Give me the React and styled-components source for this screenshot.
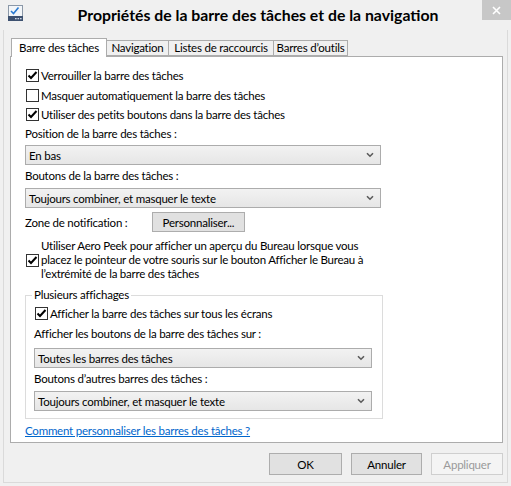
import React from 'react';
import styled, { createGlobalStyle } from 'styled-components';

const GlobalStyle = createGlobalStyle`
    body {
        margin: 0;
        background: #f0f0f0;
        font-family: Lato, "Noto Sans", sans-serif;
        font-size: 11.5px;
        letter-spacing: -0.22px;
        color: #000;
    }
`;

const Window = styled.div`
    width: 511px;
    height: 486px;
    background: #f0f0f0;
    display: flex;
    flex-direction: column;
    overflow: hidden;
`;

const TitleBar = styled.div`
    height: 30px;
    display: flex;
    align-items: flex-start;
    flex-shrink: 0;
`;

const AppIcon = styled.svg`
    margin: 5px 0 0 7px;
    flex-shrink: 0;
`;

const Title = styled.div`
    flex: 1;
    text-align: center;
    font-size: 15.8px;
    font-weight: bold;
    letter-spacing: 0;
    line-height: 29px;
    padding-left: 10px;
    color: #000;
`;

const CloseButton = styled.div`
    width: 29px;
    height: 20px;
    background: #c7c7c7;
    display: flex;
    align-items: center;
    justify-content: center;
    flex-shrink: 0;
`;

const Frame = styled.div`
    flex: 1;
    margin: 0 3px 3px;
    border: 1px solid #dadada;
    border-top: none;
    padding: 8px 4px 0 6px;
    display: flex;
    flex-direction: column;
`;

const TabStrip = styled.div`
    display: flex;
    align-items: flex-end;
    padding-left: 1px;
    position: relative;
    z-index: 1;
`;

const Tab = styled.div`
    box-sizing: border-box;
    width: ${({w}) => w}px;
    height: ${({active}) => active ? '19px' : '16px'};
    margin-left: ${({first}) => first ? '0' : '-1px'};
    margin-bottom: ${({active}) => active ? '-1px' : '0'};
    border: 1px solid #acacac;
    border-bottom: ${({active}) => active ? 'none' : '1px solid #acacac'};
    background: ${({active}) => active ? '#fff' : '#f0f0f0'};
    display: flex;
    align-items: center;
    justify-content: center;
    white-space: nowrap;
    line-height: 14px;
    padding-bottom: ${({active}) => active ? '1px' : '0'};
`;

const Panel = styled.div`
    background: #fff;
    border: 1px solid #acacac;
    padding: 8px 0 3px 14px;
    display: flex;
    flex-direction: column;
`;

const Box = styled.span`
    box-sizing: border-box;
    width: 13px;
    height: 13px;
    border: 1px solid #333;
    background: #fff;
    display: inline-flex;
    align-items: center;
    justify-content: center;
    flex-shrink: 0;
`;

const CheckRow = styled.div`
    display: flex;
    align-items: center;
    height: ${({h}) => h || 20}px;
    padding-left: 1px;
    gap: 2px;
`;

const Label = styled.div`
    height: 20px;
    line-height: 20px;
    margin-top: ${({mt}) => mt || 0}px;
`;

const Select = styled.div`
    box-sizing: border-box;
    width: ${({w}) => w}px;
    height: 20px;
    margin-top: ${({mt}) => mt || 0}px;
    border: 1px solid #acacac;
    background: linear-gradient(#f2f2f2, #e6e6e6);
    display: flex;
    align-items: center;
    justify-content: space-between;
    padding: 0 6px 0 3px;
`;

const ZoneRow = styled.div`
    display: flex;
    align-items: center;
    margin-top: 4px;
    height: 20px;
`;

const ZoneLabel = styled.span`
    width: 127px;
`;

const Button = styled.div`
    box-sizing: border-box;
    width: ${({w}) => w}px;
    height: ${({h}) => h || 22}px;
    border: 1px solid ${({disabled}) => disabled ? '#cfcfcf' : '#adadad'};
    background: ${({disabled}) => disabled ? '#f4f4f4' : '#e1e1e1'};
    color: ${({disabled}) => disabled ? '#9a9a9a' : '#000'};
    display: flex;
    align-items: center;
    justify-content: center;
`;

const PeekRow = styled.div`
    display: flex;
    align-items: center;
    gap: 2px;
    margin-top: 7px;
    padding-left: 1px;
`;

const PeekText = styled.div`
    line-height: 14px;
`;

const Group = styled.div`
    width: 358px;
    box-sizing: border-box;
    border: 1px solid #dcdcdc;
    margin-top: 14px;
    padding: 0 10px 7px 8px;
    display: flex;
    flex-direction: column;
`;

const GroupTitle = styled.div`
    line-height: 16px;
    margin: -9px 0 0 -2px;
    padding: 0 2px;
    background: #fff;
    width: fit-content;
`;

const HelpLink = styled.a`
    color: #0066cc;
    text-decoration: underline;
    line-height: 16px;
    margin-top: 4px;
    width: fit-content;
`;

const Footer = styled.div`
    display: flex;
    justify-content: flex-end;
    gap: 9px;
    margin-top: 10px;
`;

const Check = () => (
    <svg width="11" height="11" viewBox="0 0 11 11">
        <path d="M1.5 5.5 L4 8 L9.5 2" fill="none" stroke="#000" strokeWidth="2" />
    </svg>
);

const CheckBox = ({checked}) => <Box>{checked && <Check />}</Box>;

const Chevron = () => (
    <svg width="8" height="6" viewBox="0 0 8 6">
        <path d="M1 1.2 L4 4.2 L7 1.2" fill="none" stroke="#5a5a5a" strokeWidth="1.6" />
    </svg>
);

const Dropdown = ({w, mt, children}) => (
    <Select w={w} mt={mt}>
        <span>{children}</span>
        <Chevron />
    </Select>
);

const tabs = [
    {label: 'Barre des tâches', w: 96, active: true},
    {label: 'Navigation', w: 63},
    {label: 'Listes de raccourcis', w: 106},
    {label: 'Barres d\u2019outils', w: 75},
];

export default function App() {
    return (
        <>
            <GlobalStyle />
            <Window>
                <TitleBar>
                    <AppIcon width="17" height="17" viewBox="0 0 17 17">
                        <rect x="1.5" y="0.5" width="14" height="15" fill="#f3f6f9" stroke="#8b98a8" />
                        <rect x="1.5" y="11.5" width="14" height="4" fill="#3d5170" stroke="#3d5170" />
                        <rect x="8" y="13" width="1.6" height="1.3" fill="#cfd8e4" />
                        <rect x="10.5" y="13" width="1.6" height="1.3" fill="#cfd8e4" />
                        <rect x="13" y="13" width="1.6" height="1.3" fill="#cfd8e4" />
                        <path d="M4 6 L6.5 8.5 L11.5 2.5" fill="none" stroke="#2b7bd2" strokeWidth="1.6" />
                    </AppIcon>
                    <Title>Propriétés de la barre des tâches et de la navigation</Title>
                    <CloseButton>
                        <svg width="9" height="9" viewBox="0 0 9 9">
                            <path d="M1 1 L8 8 M8 1 L1 8" stroke="#fff" strokeWidth="1.6" />
                        </svg>
                    </CloseButton>
                </TitleBar>
                <Frame>
                    <TabStrip>
                        {tabs.map((t, i) => (
                            <Tab key={t.label} w={t.w} active={t.active} first={i === 0}>{t.label}</Tab>
                        ))}
                    </TabStrip>
                    <Panel>
                        <CheckRow><CheckBox checked /><span>Verrouiller la barre des tâches</span></CheckRow>
                        <CheckRow><CheckBox /><span>Masquer automatiquement la barre des tâches</span></CheckRow>
                        <CheckRow h={19}><CheckBox checked /><span>Utiliser des petits boutons dans la barre des tâches</span></CheckRow>
                        <Label>Position de la barre des tâches :</Label>
                        <Dropdown w={356} mt={1}>En bas</Dropdown>
                        <Label mt={1}>Boutons de la barre des tâches :</Label>
                        <Dropdown w={356} mt={2}>Toujours combiner, et masquer le texte</Dropdown>
                        <ZoneRow>
                            <ZoneLabel>Zone de notification :</ZoneLabel>
                            <Button w={93} h={20}>Personnaliser...</Button>
                        </ZoneRow>
                        <PeekRow>
                            <CheckBox checked />
                            <PeekText>
                                Utiliser Aero Peek pour afficher un aperçu du Bureau lorsque vous<br />
                                placez le pointeur de votre souris sur le bouton Afficher le Bureau à<br />
                                l’extrémité de la barre des tâches
                            </PeekText>
                        </PeekRow>
                        <Group>
                            <GroupTitle>Plusieurs affichages</GroupTitle>
                            <CheckRow><CheckBox checked /><span>Afficher la barre des tâches sur tous les écrans</span></CheckRow>
                            <Label mt={1}>Afficher les boutons de la barre des tâches sur :</Label>
                            <Dropdown w={338} mt={4}>Toutes les barres des tâches</Dropdown>
                            <Label mt={1}>Boutons d’autres barres des tâches :</Label>
                            <Dropdown w={338} mt={2}>Toujours combiner, et masquer le texte</Dropdown>
                        </Group>
                        <HelpLink>Comment personnaliser les barres des tâches ?</HelpLink>
                    </Panel>
                    <Footer>
                        <Button w={73}>OK</Button>
                        <Button w={71}>Annuler</Button>
                        <Button w={72} disabled>Appliquer</Button>
                    </Footer>
                </Frame>
            </Window>
        </>
    );
}
